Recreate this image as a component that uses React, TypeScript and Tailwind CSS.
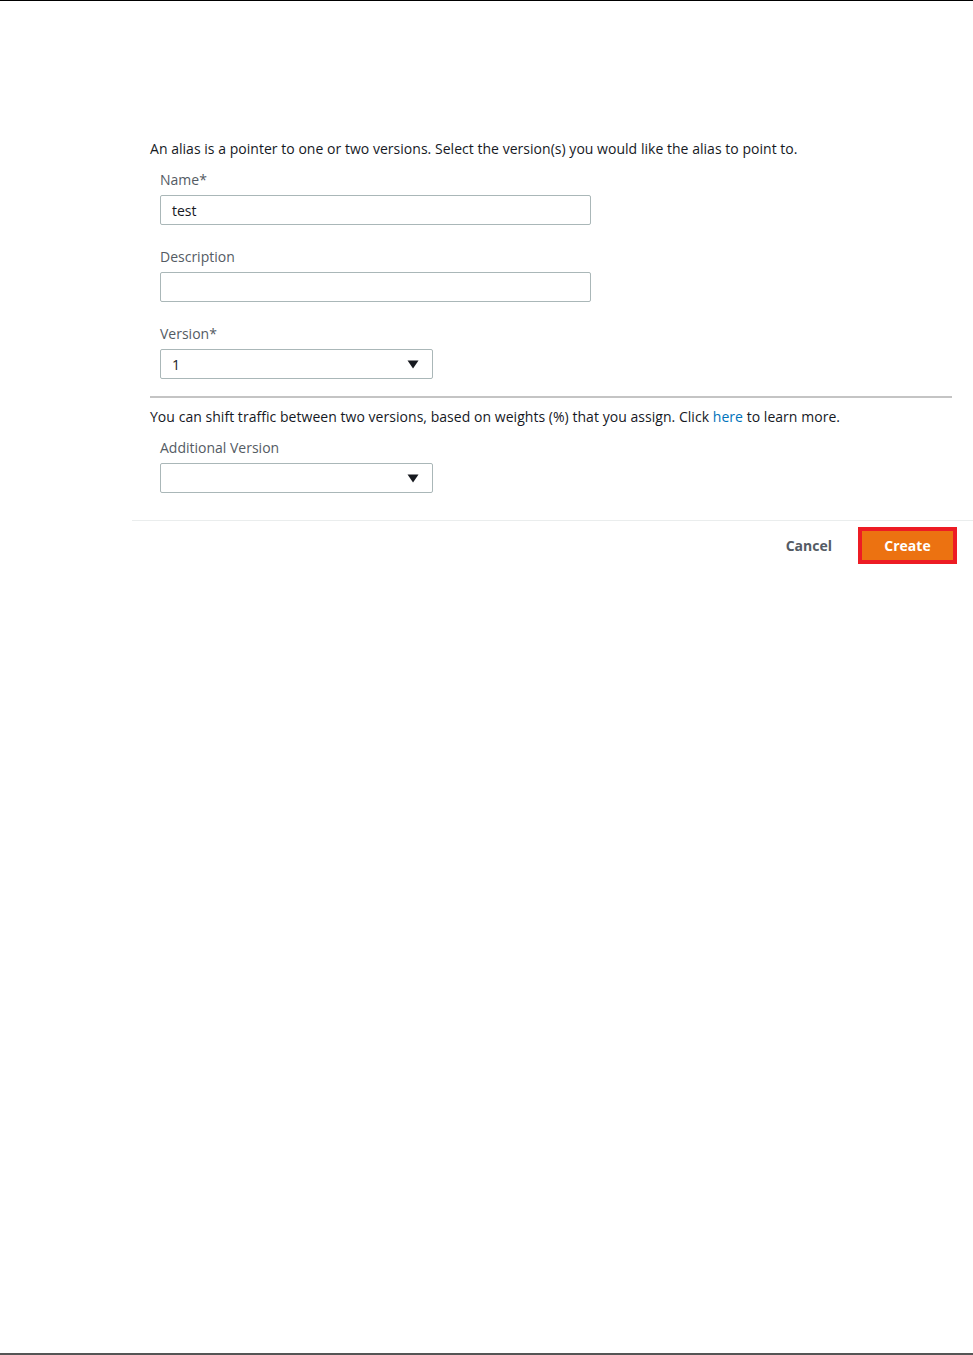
import React from "react";

function Caret() {
  return (
    <svg width="12" height="9" viewBox="0 0 12 9" className="block">
      <path d="M0.5 0.5 L11.5 0.5 L6 8.5 Z" fill="#16191f" />
    </svg>
  );
}

export default function App() {
  const font = { fontFamily: '"Open Sans", "Liberation Sans", sans-serif' };
  return (
    <div
      className="w-[973px] h-[1355px] bg-white border-t border-black border-b-2 border-b-[#555555] flex flex-col"
      style={font}
    >
      <div className="ml-[132px] flex flex-col">
        <div className="pl-[18px] pr-[21px] pt-[138px]">
          <p className="text-[14px] leading-[20px] text-[#16191f] tracking-[0.03px]">
            An alias is a pointer to one or two versions. Select the version(s) you would like the alias to point to.
          </p>
          <div className="pl-[10px] mt-[11px] flex flex-col">
            <label className="text-[14px] leading-[20px] text-[#545b64]">Name*</label>
            <div className="mt-[5px] w-[431px] h-[30px] border border-[#aab7b8] rounded-[2px] flex items-center px-[11px] text-[14px] text-[#16191f]">
              test
            </div>
            <label className="mt-[22px] text-[14px] leading-[20px] text-[#545b64]">Description</label>
            <div className="mt-[5px] w-[431px] h-[30px] border border-[#aab7b8] rounded-[2px]"></div>
            <label className="mt-[22px] text-[14px] leading-[20px] text-[#545b64]">Version*</label>
            <div className="mt-[5px] w-[273px] h-[30px] border border-[#aab7b8] rounded-[2px] flex items-center justify-between pl-[11px] pr-[13px] text-[14px] text-[#16191f]">
              <span>1</span>
              <Caret />
            </div>
          </div>
          <div className="mt-[17px] h-[2px] bg-[#c4c4c4]"></div>
          <p className="mt-[9px] text-[14px] leading-[20px] text-[#16191f] tracking-[0.04px]">
            You can shift traffic between two versions, based on weights (%) that you assign. Click{" "}
            <span className="text-[#0073bb]">here</span> to learn more.
          </p>
          <div className="pl-[10px] mt-[11px] flex flex-col">
            <label className="text-[14px] leading-[20px] text-[#545b64]">Additional Version</label>
            <div className="mt-[5px] w-[273px] h-[30px] border border-[#aab7b8] rounded-[2px] flex items-center justify-end pr-[13px]">
              <Caret />
            </div>
          </div>
        </div>
        <div className="mt-[27px] border-t border-[#eaeded] flex items-center justify-end pt-[6px] pr-[16px]">
          <span className="text-[14px] font-bold text-[#545b64] mr-[26px]">Cancel</span>
          <div className="border-[4px] border-[#ed1c24] w-[99px] h-[37px] flex">
            <div className="flex-1 bg-[#ec7211] flex items-center justify-center text-[14px] font-bold text-white">
              Create
            </div>
          </div>
        </div>
      </div>
    </div>
  );
}
